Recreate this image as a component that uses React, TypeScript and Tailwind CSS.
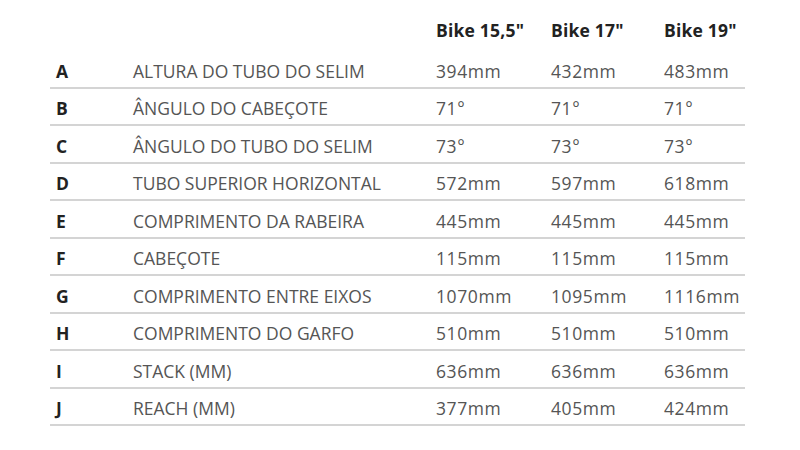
const rows = [
  { key: "A", label: "ALTURA DO TUBO DO SELIM", values: ["394mm", "432mm", "483mm"] },
  { key: "B", label: "ÂNGULO DO CABEÇOTE", values: ["71°", "71°", "71°"] },
  { key: "C", label: "ÂNGULO DO TUBO DO SELIM", values: ["73°", "73°", "73°"] },
  { key: "D", label: "TUBO SUPERIOR HORIZONTAL", values: ["572mm", "597mm", "618mm"] },
  { key: "E", label: "COMPRIMENTO DA RABEIRA", values: ["445mm", "445mm", "445mm"] },
  { key: "F", label: "CABEÇOTE", values: ["115mm", "115mm", "115mm"] },
  { key: "G", label: "COMPRIMENTO ENTRE EIXOS", values: ["1070mm", "1095mm", "1116mm"] },
  { key: "H", label: "COMPRIMENTO DO GARFO", values: ["510mm", "510mm", "510mm"] },
  { key: "I", label: "STACK (MM)", values: ["636mm", "636mm", "636mm"] },
  { key: "J", label: "REACH (MM)", values: ["377mm", "405mm", "424mm"] },
];

const sizes = ['Bike 15,5"', 'Bike 17"', 'Bike 19"'];

const cols = "grid grid-cols-[83px_303px_115px_113px_81px]";

export default function App() {
  return (
    <div
      className="w-[800px] h-[450px] bg-white overflow-hidden pl-[50px]"
      style={{ fontFamily: '"Open Sans", "Noto Sans", sans-serif' }}
    >
      <div className="w-[695px]">
        {/* header */}
        <div className={`${cols} h-[51px] items-end pb-[8px]`}>
          <div />
          <div />
          {sizes.map((s) => (
            <div key={s} className="text-[17.5px] font-bold text-[#222] tracking-[0.2px]">
              {s}
            </div>
          ))}
        </div>

        {rows.map((r) => (
          <div
            key={r.key}
            className={`${cols} h-[37.5px] items-center pt-[4px] border-b-2 border-[#d4d4d4] text-[17.5px] text-[#555]`}
          >
            <div className="pl-[6px] font-bold text-[#222]">{r.key}</div>
            <div>{r.label}</div>
            {r.values.map((v, i) => (
              <div key={i} className="tracking-[0.6px]">
                {v}
              </div>
            ))}
          </div>
        ))}
      </div>
    </div>
  );
}
